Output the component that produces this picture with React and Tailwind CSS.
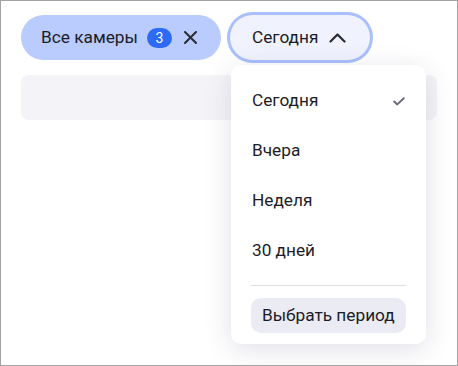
import React from "react";

export default function App() {
  const items = ["Сегодня", "Вчера", "Неделя", "30 дней"];
  return (
    <div
      className="relative w-[458px] h-[366px] border border-[#a3a3a3] bg-white overflow-hidden text-[#1c1c28]"
      style={{ fontFamily: "Roboto, 'Noto Sans', sans-serif" }}
    >
      <div className="flex items-center gap-[9px] pl-5 pt-[14px]">
        <div className="flex items-center h-[45px] rounded-full bg-[#bacbfe] pl-5 pr-[24px]">
          <span className="text-[17.25px] leading-none whitespace-nowrap">Все камеры</span>
          <span className="ml-[9px] flex items-center justify-center w-[25px] h-[20px] rounded-full bg-[#2e6bf5] text-white text-[14px] leading-none">
            3
          </span>
          <svg className="ml-[12px]" width="13" height="13" viewBox="0 0 13 13">
            <path d="M1 1L12 12M12 1L1 12" stroke="#2a2a33" strokeWidth="2" strokeLinecap="round" />
          </svg>
        </div>
        <div className="relative">
          <div className="flex items-center h-[45px] rounded-full bg-[#f0f3fe] pl-[22px] pr-[24px] shadow-[0_0_0_3px_#a9c0fc]">
            <span className="text-[17.25px] leading-none whitespace-nowrap">Сегодня</span>
            <svg className="ml-[11px]" width="17" height="10" viewBox="0 0 17 10">
              <path d="M1.5 8.5L8.5 1.5L15.5 8.5" stroke="#2a2a33" strokeWidth="2.2" fill="none" strokeLinecap="round" strokeLinejoin="round" />
            </svg>
          </div>
          <div className="absolute z-10 left-[1px] top-full mt-[5px] w-[195px] rounded-[10px] bg-white px-5 pt-[11px] pb-[11px] shadow-[0_6px_28px_rgba(40,40,90,0.14)]">
            {items.map((t, i) => (
              <div key={t} className="flex items-center justify-between h-[50px] pl-px">
                <span className="text-[17.25px] leading-none whitespace-nowrap">{t}</span>
                {i === 0 && (
                  <svg width="12" height="9" viewBox="0 0 12 9" className="mr-px">
                    <path d="M1.2 4.5L4.3 7.4L10.8 1.2" stroke="#6c6c78" strokeWidth="2" fill="none" strokeLinecap="round" strokeLinejoin="round" />
                  </svg>
                )}
              </div>
            ))}
            <div className="mt-[9px] h-px bg-[#dedee4]" />
            <div className="mt-[12px] h-[35px] flex items-center rounded-[10px] bg-[#ebebf3] px-[11px]">
              <span className="text-[17.25px] leading-none whitespace-nowrap">Выбрать период</span>
            </div>
          </div>
        </div>
      </div>
      <div className="mx-5 mt-[15px] h-[45px] rounded-lg bg-[#f4f4f8]" />
    </div>
  );
}
